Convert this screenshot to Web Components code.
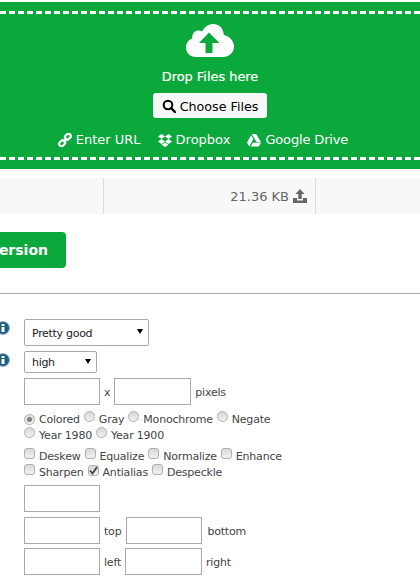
<!DOCTYPE html>
<html>
<head>
<meta charset="utf-8">
<title>Convert</title>
<style>
  html, body { margin: 0; padding: 0; background: #fff; overflow: hidden; }
  body { width: 420px; height: 583px; font-family: "DejaVu Sans", sans-serif; font-size: 11px; color: #555; }
</style>
</head>
<body>
<upload-panel></upload-panel>
<file-row></file-row>
<start-button>Start conversion</start-button>
<options-form></options-form>

<script>
const ICONS = {
  cloud: '<svg width="48" height="33" viewBox="0 0 48 33"><path fill="#fff" d="M10 33C4 33 0 29 0 23.500c0-4.200 2.500-7.500 6.300-8.900C6.200 14 6.200 13.500 6.200 13c0-3.800 2.900-6.500 6.500-6.500 1.300 0 2.400.3 3.400 1C18.200 3 22.500 0 27 0c5.800 0 10 4 10.600 9.500.1.500.1 1 .1 1.400C43.500 12 48 16.800 48 22.500 48 28.500 43 33 37 33z"/><path fill="#0ba83c" d="M19 29h7V19h7L22.500 8.500 12.500 19H19z" transform="translate(0.500 0)"/></svg>',
  search: '<svg width="14" height="14" viewBox="0 0 14 14"><circle cx="6" cy="6" r="4.300" fill="none" stroke="#000" stroke-width="2"/><path d="M9 9l4 4" stroke="#000" stroke-width="2.400" stroke-linecap="round"/></svg>',
  link: '<svg width="14" height="14" viewBox="0 0 15 15" fill="none" stroke="#fff" stroke-width="2.300"><rect x="7" y="1.500" width="7" height="5" rx="2.500" transform="rotate(-45 10.500 4)"/><rect x="1" y="8.500" width="7" height="5" rx="2.500" transform="rotate(-45 4.500 11)"/><path d="M5.500 9.500l4-4"/></svg>',
  dropbox: '<svg width="14" height="13" viewBox="0 0 14 13" fill="#fff"><path d="M3.500 0L0 2.500 3.500 5 7 2.500zM10.500 0L7 2.500 10.500 5 14 2.500zM3.500 5L0 7.500 3.500 10 7 7.500zM10.500 5L7 7.500 10.500 10 14 7.500zM3.500 10.800L7 8.400l3.500 2.400L7 13z"/></svg>',
  drive: '<svg width="14" height="13" viewBox="0 0 14 13" fill="#fff"><path d="M4.800 0h4.400l4.800 8.300H9.600zM4.100 1.300l2.200 3.800L2.200 12.500 0 8.500zM3.700 12.500l2.100-3.700H14l-2.200 3.700z"/></svg>',
  upload: '<svg width="14" height="14" viewBox="0 0 14 14" fill="#666"><path d="M7 0L11.500 5H8.700V10H5.300V5H2.500z"/><path d="M0 9h4v2.500h6V9h4v5H0z"/></svg>',
  info: '<svg width="14" height="14" viewBox="0 0 14 14"><circle cx="7" cy="7" r="6.500" fill="#1d5f85" stroke="#9db8c8"/><rect x="5.500" y="6" width="3" height="5" fill="#fff"/><rect x="5.500" y="3" width="3" height="2" fill="#fff"/></svg>'
};

class UploadPanel extends HTMLElement {
  constructor() {
    super();
    this.attachShadow({ mode: "open" });
    this.shadowRoot.innerHTML = `
      <style>
        :host { display: block; box-sizing: border-box; margin-top: 2px; height: 167px; background: #0ba83c; padding-top: 9px; color: #fff; font-family: "DejaVu Sans", sans-serif; }
        .frame { height: 149px; box-sizing: border-box; display: flex; flex-direction: column; align-items: center; padding-top: 13px;
          background:
            repeating-linear-gradient(90deg, #fff 0 6px, transparent 6px 9px) top left / 100% 3px no-repeat,
            repeating-linear-gradient(90deg, #fff 0 6px, transparent 6px 9px) bottom left / 100% 3px no-repeat; }
        .cloud { height: 33px; line-height: 0; }
        .drop { margin-top: 11px; font-size: 12.900px; line-height: 18px; -webkit-text-stroke: .2px #fff; }
        .choose { margin-top: 7px; height: 25px; width: 114px; box-sizing: border-box; background: #f8f8f8; border-radius: 3px; color: #000; font-size: 12.700px; display: flex; align-items: center; justify-content: center; gap: 4px; padding-top: 1px; }
        .choose svg { margin-top: -1px; }
        .links { margin: 12px 14px 0 0; display: flex; gap: 17px; font-size: 13px; line-height: 20px; }
        .links span { display: flex; align-items: center; gap: 4px; }
        .links span:nth-child(3) { letter-spacing: -.15px; }
      </style>
      <div class="frame">
        <div class="cloud">${ICONS.cloud}</div>
        <div class="drop">Drop Files here</div>
        <div class="choose">${ICONS.search}<span>Choose Files</span></div>
        <div class="links">
          <span>${ICONS.link}Enter URL</span>
          <span>${ICONS.dropbox}Dropbox</span>
          <span>${ICONS.drive}Google Drive</span>
        </div>
      </div>`;
  }
}
customElements.define("upload-panel", UploadPanel);

class FileRow extends HTMLElement {
  constructor() {
    super();
    this.attachShadow({ mode: "open" });
    this.shadowRoot.innerHTML = `
      <style>
        :host { display: grid; grid-template-columns: 103px 213px 1fr; margin-top: 9px; height: 36px; background: #f8f8f8; font: 13px "DejaVu Sans", sans-serif; color: #666; }
        .size { border-left: 1px solid #ddd; border-right: 1px solid #ddd; display: flex; align-items: center; justify-content: flex-end; gap: 4px; padding-right: 8px; }
      </style>
      <div></div>
      <div class="size">21.36 KB ${ICONS.upload}</div>
      <div></div>`;
  }
}
customElements.define("file-row", FileRow);

class StartButton extends HTMLElement {
  constructor() {
    super();
    this.attachShadow({ mode: "open" });
    this.shadowRoot.innerHTML = `
      <style>
        :host { display: flex; justify-content: flex-end; width: 66px; margin-top: 18px; height: 36px; box-sizing: border-box; background: #0ba83c; border-radius: 0 4px 4px 0; color: #fff; font: bold 14px/36px "DejaVu Sans", sans-serif; padding-right: 18px; white-space: nowrap; overflow: hidden; }
      </style>
      <slot></slot>`;
  }
}
customElements.define("start-button", StartButton);

class BoxInput extends HTMLElement {
  constructor() {
    super();
    this.attachShadow({ mode: "open" });
    const w = this.getAttribute("w") || 76;
    this.shadowRoot.innerHTML = `
      <style>
        :host { display: inline-block; box-sizing: border-box; width: ${w}px; height: 27px; border: 1px solid #a9a9a9; background: #fff; flex: none; }
      </style>`;
  }
}
customElements.define("box-input", BoxInput);

class FakeSelect extends HTMLElement {
  constructor() {
    super();
    this.attachShadow({ mode: "open" });
    const w = this.getAttribute("w");
    const h = this.getAttribute("h");
    this.shadowRoot.innerHTML = `
      <style>
        :host { display: flex; box-sizing: border-box; width: ${w}px; height: ${h}px; border: 1px solid #a9a9a9; border-radius: 2px; background: #fff; align-items: center; justify-content: space-between; padding: 1px 2px 0 7px; font-size: 11px; letter-spacing: -.3px; color: #222; }
        i { width: 0; height: 0; border: 3px solid transparent; border-top: 5px solid #000; border-bottom: 0; margin-right: 3px; margin-top: -3px; }
      </style>
      <slot></slot><i></i>`;
  }
}
customElements.define("fake-select", FakeSelect);

class OptMark extends HTMLElement {
  constructor() {
    super();
    this.attachShadow({ mode: "open" });
    const radio = this.hasAttribute("radio");
    const on = this.hasAttribute("on");
    let inner = "";
    if (on && radio) inner = '<b class="dot"></b>';
    if (on && !radio) inner = '<svg width="9" height="9" viewBox="0 0 9 9"><path d="M1 4.500l2.500 3L8 1" fill="none" stroke="#444" stroke-width="1.800"/></svg>';
    this.shadowRoot.innerHTML = `
      <style>
        :host { display: inline-flex; align-items: center; justify-content: center; box-sizing: border-box; width: 11px; height: 11px; border: 1px solid #b0b0b0; border-radius: ${radio ? "50%" : "3px"}; background: linear-gradient(#d8d8d8, #f2f2f2); vertical-align: 1px; }
        .dot { width: 5px; height: 5px; border-radius: 50%; background: #808080; }
      </style>${inner}`;
  }
}
customElements.define("opt-mark", OptMark);

class OptionsForm extends HTMLElement {
  constructor() {
    super();
    this.attachShadow({ mode: "open" });
    const opt = (t, attrs) => `<span class="opt"><opt-mark ${attrs || ""}></opt-mark>${t}</span>`;
    this.shadowRoot.innerHTML = `
      <style>
        :host { display: block; margin-top: 25px; border-top: 1px solid #aaa; padding: 25px 0 0 24px; font: 11px/15px "DejaVu Sans", sans-serif; letter-spacing: -.2px; color: #444; position: relative; }
        .row { display: flex; align-items: center; gap: 4px; }
        .row .t { padding-top: 2px; }
        .info { position: absolute; left: -4px; line-height: 0; }
        .opts { margin-top: 6px; }
        .opts div { height: 16px; line-height: 16px; white-space: nowrap; }
        .opt { margin-right: 4px; }
        .opt opt-mark { margin-right: 4px; }
      </style>
      <div class="info" style="top:27px">${ICONS.info}</div>
      <div class="info" style="top:59px">${ICONS.info}</div>
      <fake-select w="125" h="27">Pretty good</fake-select>
      <fake-select w="73" h="22" style="margin-top:5px">high</fake-select>
      <div class="row" style="margin-top:5px"><box-input></box-input><span class="t">x</span><box-input w="77"></box-input><span class="t">pixels</span></div>
      <div class="opts">
        <div>${opt("Colored", "radio on")}${opt("Gray", "radio")}${opt("Monochrome", "radio")}${opt("Negate", "radio")}</div>
        <div>${opt("Year 1980", "radio")}${opt("Year 1900", "radio")}</div>
      </div>
      <div class="opts" style="margin-top:5px">
        <div>${opt("Deskew")}${opt("Equalize")}${opt("Normalize")}${opt("Enhance")}</div>
        <div>${opt("Sharpen")}${opt("Antialias", "on")}${opt("Despeckle")}</div>
      </div>
      <box-input style="display:block;margin-top:5px"></box-input>
      <div class="row" style="margin-top:5px"><box-input></box-input><span class="t" style="margin-right:1px">top</span><box-input></box-input><span class="t" style="margin-left:1px">bottom</span></div>
      <div class="row" style="margin-top:4px"><box-input></box-input><span class="t">left</span><box-input w="77"></box-input><span class="t">right</span></div>`;
  }
}
customElements.define("options-form", OptionsForm);
</script>
</body>
</html>
